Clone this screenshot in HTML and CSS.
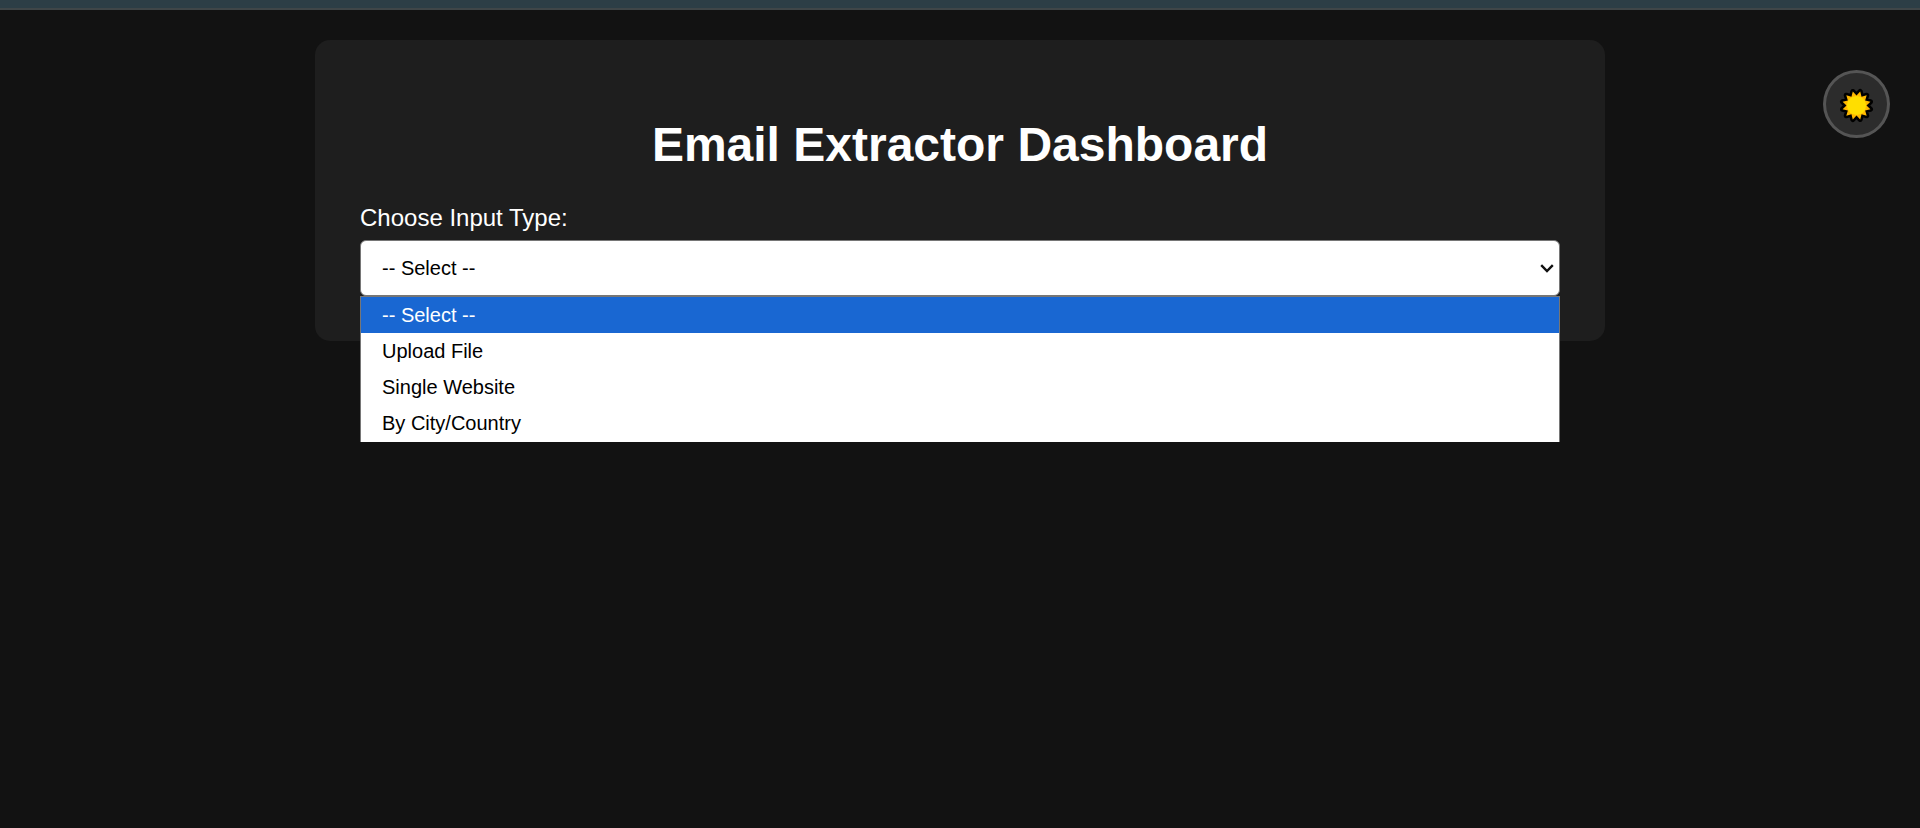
FILE: index.html
```html
<!DOCTYPE html>
<html lang="en">
<head>
<meta charset="utf-8">
<title>Email Extractor Dashboard</title>
<link rel="stylesheet" href="styles.css">
</head>
<body>
<div class="topbar"></div>
<main class="card">
  <h1 class="title">Email Extractor Dashboard</h1>
  <label class="label" for="input-type">Choose Input Type:</label>
  <div class="field">
    <select class="select" id="input-type">
      <option>-- Select --</option>
      <option>Upload File</option>
      <option>Single Website</option>
      <option>By City/Country</option>
    </select>
    <svg class="chevron" viewBox="0 0 14 9" aria-hidden="true"><path d="M1.2 1.2 7 7 12.8 1.2" fill="none" stroke="#101010" stroke-width="2.4"/></svg>
    <ul class="menu">
      <li class="option option-active">-- Select --</li>
      <li class="option">Upload File</li>
      <li class="option">Single Website</li>
      <li class="option">By City/Country</li>
    </ul>
  </div>
</main>
<button class="theme" type="button" aria-label="Toggle theme">
  <svg class="sun" viewBox="-17 -17 34 34" aria-hidden="true">
    <path d="M-3.6 -13.5 0 -9.7 3.6 -13.5 4.9 -8.4 9.9 -9.9 8.4 -4.9 13.5 -3.6 9.7 0 13.5 3.6 8.4 4.9 9.9 9.9 4.9 8.4 3.6 13.5 0 9.7 -3.6 13.5 -4.9 8.4 -9.9 9.9 -8.4 4.9 -13.5 3.6 -9.7 0 -13.5 -3.6 -8.4 -4.9 -9.9 -9.9 -4.9 -8.4Z" fill="#ffb900" stroke="#000" stroke-width="5" stroke-linejoin="round" paint-order="stroke"/>
    <circle r="9.3" fill="#ffde00"/>
  </svg>
</button>
</body>
</html>
```
FILE: styles.css
```css
* { box-sizing: border-box; }
body {
  margin: 0;
  min-height: 100vh;
  background: #121212;
  color: #fff;
  font-family: "Liberation Sans", Arial, sans-serif;
}
.topbar {
  height: 10px;
  background: #2c3e46;
  border-bottom: 2px solid #3f4648;
}
.card {
  max-width: 1290px;
  margin: 30px auto 0;
  padding: 77px 45px 45px;
  background: #1e1e1e;
  border-radius: 15px;
}
.title {
  margin: 0 0 32px;
  font-size: 48px;
  line-height: 55px;
  text-align: center;
}
.label {
  display: block;
  margin-bottom: 8px;
  font-size: 24px;
  line-height: 28px;
}
.field { position: relative; }
.select {
  display: block;
  width: 100%;
  height: 56px;
  padding: 0 21px;
  appearance: none;
  border: 1px solid #767676;
  border-radius: 6px;
  background: #fff;
  color: #000;
  font: 20px "Liberation Sans", Arial, sans-serif;
}
.chevron {
  position: absolute;
  top: 24px;
  right: 6px;
  width: 14px;
  height: 9px;
  pointer-events: none;
}
.menu {
  position: absolute;
  top: 100%;
  left: 0;
  width: 100%;
  margin: 0;
  padding: 0 0 1px;
  list-style: none;
  background: #fff;
  border: 1px solid #767676;
  border-bottom: 0;
  color: #000;
}
.option {
  padding: 0 21px;
  font-size: 20px;
  line-height: 36px;
}
.option-active {
  background: #1967d2;
  color: #fff;
}
.theme {
  position: fixed;
  top: 70px;
  right: 30px;
  width: 67px;
  height: 68px;
  padding: 2px 0 0;
  display: grid;
  place-items: center;
  border: 3px solid #555;
  border-radius: 50%;
  background: #2c2c2c;
}
.sun {
  width: 35px;
  height: 35px;
}
```
